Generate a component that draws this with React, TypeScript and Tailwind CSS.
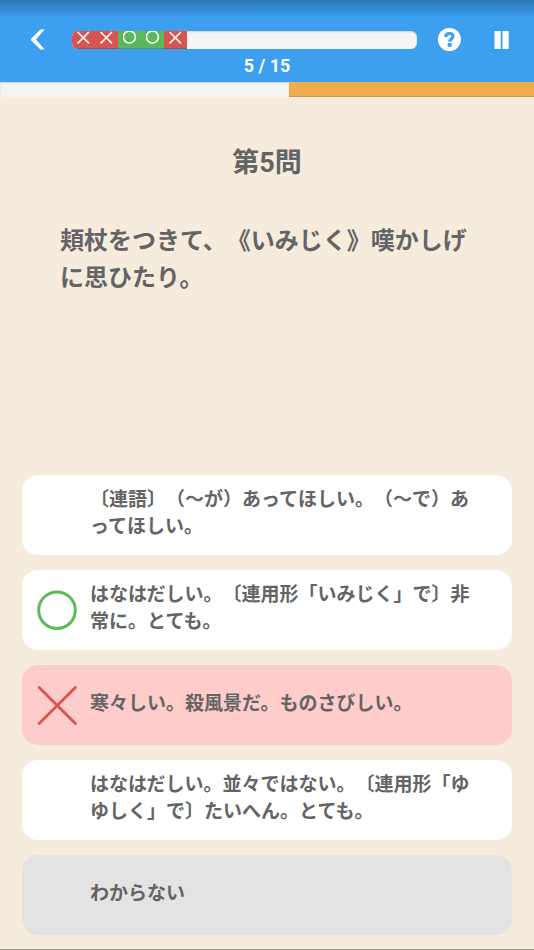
import { useState } from 'react'
import clsx from 'clsx'

type Mark = 'correct' | 'wrong'

interface Answer {
  id: number
  text: string
  mark?: Mark
  skip?: boolean
}

const TOTAL = 15

const results: Mark[] = ['wrong', 'wrong', 'correct', 'correct', 'wrong']

const answers: Answer[] = [
  { id: 1, text: '〔連語〕（〜が）あってほしい。（〜で）あってほしい。' },
  { id: 2, text: 'はなはだしい。〔連用形「いみじく」で〕非常に。とても。', mark: 'correct' },
  { id: 3, text: '寒々しい。殺風景だ。ものさびしい。', mark: 'wrong' },
  { id: 4, text: 'はなはだしい。並々ではない。〔連用形「ゆゆしく」で〕たいへん。とても。' },
  { id: 5, text: 'わからない', skip: true },
]

function MarkIcon({ mark, className }: { mark: Mark; className?: string }) {
  return (
    <svg viewBox="0 0 40 40" fill="none" stroke="currentColor" strokeLinecap="round" className={className}>
      {mark === 'correct' ? (
        <circle cx="20" cy="20.2" r="18.3" strokeWidth="3" />
      ) : (
        <path d="M2.2 2.4 38.4 38.6M38.4 2.4 2.2 38.6" strokeWidth="2.8" />
      )}
    </svg>
  )
}

function SmallMark({ mark }: { mark: Mark }) {
  return (
    <svg viewBox="0 0 14 14" fill="none" stroke="currentColor" strokeWidth="1.6" className="h-[14px] w-[14px]">
      {mark === 'correct' ? <circle cx="6.4" cy="6" r="6" /> : <path d="M.6 1 12 12.4M12 1 .6 12.4" />}
    </svg>
  )
}

function Header({ paused, onPause }: { paused: boolean; onPause: () => void }) {
  return (
    <header className="bg-[#3c9ff0] bg-linear-to-b from-[#2c76b2] to-[#3c9ff0] to-[18px] pt-7 text-white">
      <div className="flex items-center pr-[21px] pl-6">
        <button type="button" aria-label="戻る" className="flex h-6 w-7 items-center justify-center">
          <svg viewBox="0 0 14 20" className="h-5 w-[14px] overflow-visible" fill="currentColor">
            <path d="M9.4 -.6H13.7L4.9 9.5 13.7 19.4H9.4L0 10.2V8.8Z" />
          </svg>
        </button>
        <div className="ml-5 flex h-[18px] flex-1 overflow-hidden rounded-md bg-[#f5f5f5] shadow-[inset_0_1px_2px_rgba(0,0,0,0.15)]">
          {results.map((mark, i) => (
            <div
              key={i}
              className={clsx(
                'flex justify-center shadow-[inset_0_-1px_0_rgba(0,0,0,0.15)]',
                mark === 'correct' ? 'bg-[#5cb85c]' : 'bg-[#d9534f]'
              )}
              style={{ width: `${100 / TOTAL}%` }}
            >
              <SmallMark mark={mark} />
            </div>
          ))}
        </div>
        <button type="button" aria-label="ヘルプ" className="ml-5 flex h-6 w-6 items-center justify-center">
          <svg viewBox="0 0 24 24" className="h-6 w-6">
            <circle cx="12.4" cy="11.5" r="11.5" fill="#fff" />
            <path
              d="M8.8 8.9C8.8 6.6 10.3 5.5 12.4 5.5S15.9 6.6 15.9 8.5C15.9 10.9 12.7 11 12.7 13.7"
              fill="none"
              stroke="#3c9ff0"
              strokeWidth="3.2"
            />
            <rect x="10.7" y="15" width="4" height="3.8" fill="#3c9ff0" />
          </svg>
        </button>
        <button
          type="button"
          aria-label="一時停止"
          aria-pressed={paused}
          onClick={onPause}
          className="ml-7 flex h-6 w-6 items-center justify-center"
        >
          <svg viewBox="0 0 15 18" className="h-[18px] w-[15px]" fill="currentColor">
            <rect x="0.5" y="0" width="6.2" height="18" rx="0.5" />
            <rect x="8.5" y="0" width="6.2" height="18" rx="0.5" />
          </svg>
        </button>
      </div>
      <p className="pt-1 pb-1.5 text-center font-['Roboto',sans-serif] text-lg leading-5 font-bold">
        {results.length} / {TOTAL}
      </p>
    </header>
  )
}

function TimeBar({ elapsed }: { elapsed: number }) {
  return (
    <div className="flex h-[15px] bg-[#f5f5f5] shadow-[inset_0_1px_2px_rgba(0,0,0,0.15)]">
      <div
        className="ml-auto border-b border-[#d09540] bg-[#f0ad4e]"
        style={{ width: `${100 - elapsed}%` }}
      />
    </div>
  )
}

export default function App() {
  const [paused, setPaused] = useState(false)

  return (
    <div className="flex min-h-screen flex-col border-b border-[#9b958c] bg-[#f6ecde] font-['Roboto','Noto_Sans_CJK_JP',sans-serif] font-bold text-[#646464] [text-spacing-trim:space-all]">
      <Header paused={paused} onPause={() => setPaused(!paused)} />
      <TimeBar elapsed={54.1} />

      <main className="flex flex-1 flex-col">
        <section className="px-[60px] pt-[46px]">
          <h1 className="text-center text-[27px] leading-10">第5問</h1>
          <p className="mt-10 text-2xl leading-[37px]">頬杖をつきて、《いみじく》嘆かしげに思ひたり。</p>
        </section>

        {/* Answers */}
        <div className="mt-auto flex flex-col gap-[15px] px-[22px] pt-8 pb-[14px]">
          {answers.map((answer) => (
            <button
              key={answer.id}
              type="button"
              className={clsx(
                'flex min-h-20 items-center rounded-2xl pr-8 pl-[15px] text-left',
                answer.skip ? 'bg-[#e3e3e3]' : answer.mark === 'wrong' ? 'bg-[#ffcccc]' : 'bg-white'
              )}
            >
              <span className="mr-[13px] h-10 w-10 shrink-0">
                {answer.mark && (
                  <MarkIcon
                    mark={answer.mark}
                    className={clsx('h-10 w-10', answer.mark === 'correct' ? 'text-[#5cb85c]' : 'text-[#d9534f]')}
                  />
                )}
              </span>
              <span className="pb-1 text-[19px] leading-[27px]">{answer.text}</span>
            </button>
          ))}
        </div>
      </main>
    </div>
  )
}
